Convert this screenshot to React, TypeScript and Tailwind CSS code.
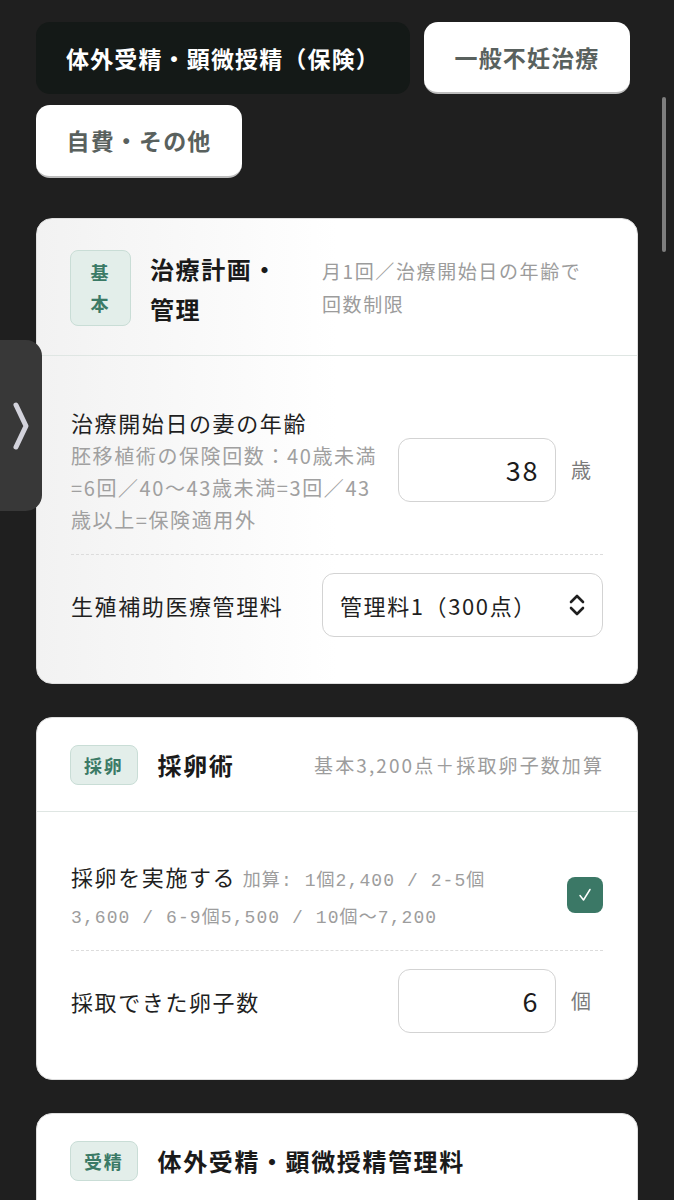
import React from "react";

const JP = '"Noto Sans CJK JP", "Noto Sans", sans-serif';
const MONO = '"Liberation Mono", "Noto Sans CJK JP", monospace';

function Badge({ children, narrow }: { children: React.ReactNode; narrow?: boolean }) {
  return (
    <div
      className={
        "shrink-0 rounded-[8px] border-[1.5px] border-[#c9ddd6] bg-[#e3eeea] text-center text-[18px] font-semibold tracking-[0.1em] text-[#3b7a66] " +
        (narrow ? "w-[61px] py-[6px] leading-[31px]" : "px-[13px] py-[6px] leading-[26px]")
      }
    >
      {children}
    </div>
  );
}

function NumInput({ value, unit }: { value: string; unit: string }) {
  return (
    <div className="flex shrink-0 items-center gap-[15px]">
      <div className="flex h-[64px] w-[158px] items-center justify-end rounded-[12px] border-[1.5px] border-[#d3d3d3] bg-white pr-[16px] text-[27px] text-[#1c1c1c]">
        {value}
      </div>
      <div className="w-[32px] text-[20px] text-[#7a7a7a]">{unit}</div>
    </div>
  );
}

function Divider() {
  return <div className="my-[18px] border-t-[1.5px] border-dashed border-[#dcdcdc]" />;
}

export default function App() {
  return (
    <div
      className="relative min-h-[1200px] overflow-hidden bg-[#1f1f1f] tracking-[0.1em]"
      style={{ fontFamily: JP }}
    >
      {/* tabs */}
      <div className="flex flex-wrap gap-x-[14px] gap-y-[11px] px-[36px] pt-[22px]">
        <div className="flex h-[72px] w-[374px] items-center justify-center rounded-[14px] bg-[#141917] text-[23px] font-bold tracking-[0.05em] text-white">
          体外受精・顕微授精（保険）
        </div>
        <div className="flex h-[72px] w-[206px] items-center justify-center rounded-[14px] border-b-[2px] border-[#bdbdbd] bg-white text-[23px] font-bold tracking-[0.05em] text-[#59615e]">
          一般不妊治療
        </div>
        <div className="flex h-[73px] w-[206px] items-center justify-center rounded-[14px] border-b-[2px] border-[#bdbdbd] bg-white text-[23px] font-bold tracking-[0.05em] text-[#59615e]">
          自費・その他
        </div>
      </div>

      <div className="flex flex-col gap-[33px] px-[36px] pt-[40px]">
        {/* card 1 */}
        <div className="overflow-hidden rounded-[16px] border border-[#dedede] bg-linear-to-r from-[#f2f2f2] via-white to-white">
          <div className="flex items-start gap-[19px] border-b-[1.5px] border-[#dfe6e3] px-[33px] pb-[26px] pt-[31px]">
            <Badge narrow>
              基<br />本
            </Badge>
            <div className="-mt-[1px] w-[153px] shrink-0 whitespace-nowrap text-[24px] font-bold leading-[40px] text-[#1a1a1a]">
              治療計画・<br />管理
            </div>
            <div className="mt-[4px] whitespace-nowrap text-[19px] leading-[33px] text-[#9c9c9c]">
              月1回／治療開始日の年齢で<br />回数制限
            </div>
          </div>
          <div className="px-[34px] pb-[46px] pt-[48px]">
            <div className="flex items-center justify-between gap-[20px]">
              <div className="min-w-0">
                <div className="whitespace-nowrap text-[22px] leading-[36px] text-[#1f1f1f]">
                  治療開始日の妻の年齢
                </div>
                <div className="whitespace-nowrap text-[20px] leading-[32px] text-[#a0a0a0]">
                  胚移植術の保険回数：40歳未満<br />=6回／40〜43歳未満=3回／43<br />歳以上=保険適用外
                </div>
              </div>
              <NumInput value="38" unit="歳" />
            </div>
            <Divider />
            <div className="flex items-center justify-between">
              <div className="whitespace-nowrap text-[22px] text-[#1f1f1f]">生殖補助医療管理料</div>
              <div className="flex h-[64px] w-[281px] items-center justify-between rounded-[12px] border-[1.5px] border-[#d3d3d3] bg-white pl-[17px] pr-[15px] text-[22px] text-[#1f1f1f]">
                <span className="whitespace-nowrap">管理料1（300点）</span>
                <svg width="20" height="28" viewBox="0 0 20 28" fill="none" stroke="#1f1f1f" strokeWidth="2.6" strokeLinecap="round" strokeLinejoin="round">
                  <path d="M4 11 L10 5 L16 11" />
                  <path d="M4 17 L10 23 L16 17" />
                </svg>
              </div>
            </div>
          </div>
        </div>

        {/* card 2 */}
        <div className="overflow-hidden rounded-[16px] border border-[#dedede] bg-white">
          <div className="flex items-center gap-[20px] border-b-[1.5px] border-[#dfe6e3] px-[33px] pb-[26px] pt-[27px]">
            <Badge>採卵</Badge>
            <div className="whitespace-nowrap text-[24px] font-bold text-[#1a1a1a]">採卵術</div>
            <div className="ml-auto whitespace-nowrap text-[19px] tracking-[0.11em] text-[#9c9c9c]">基本3,200点＋採取卵子数加算</div>
          </div>
          <div className="px-[34px] pb-[46px] pt-[46px]">
            <div className="flex items-center justify-between gap-[20px]">
              <div className="text-[22px] leading-[37px]">
                <span className="text-[#1f1f1f]">採卵を実施する</span>{" "}
                <span className="text-[18px] leading-[20px] tracking-[0.06em] text-[#9d9d9d]" style={{ fontFamily: MONO }}>
                  加算: 1個2,400 / 2-5個
                  <br />
                  3,600 / 6-9個5,500 / 10個〜7,200
                </span>
              </div>
              <div className="flex h-[36px] w-[36px] shrink-0 items-center justify-center rounded-[8px] bg-[#3b7866]">
                <svg width="16" height="16" viewBox="0 0 16 16" fill="none" stroke="white" strokeWidth="1.5" strokeLinecap="round" strokeLinejoin="round">
                  <path d="M3 8.5 L6.5 13 L13 2.5" />
                </svg>
              </div>
            </div>
            <Divider />
            <div className="flex items-center justify-between">
              <div className="whitespace-nowrap text-[22px] text-[#1f1f1f]">採取できた卵子数</div>
              <NumInput value="6" unit="個" />
            </div>
          </div>
        </div>

        {/* card 3 */}
        <div className="overflow-hidden rounded-[16px] border border-[#dedede] bg-white">
          <div className="flex items-center gap-[20px] border-b-[1.5px] border-[#dfe6e3] px-[33px] pb-[26px] pt-[27px]">
            <Badge>受精</Badge>
            <div className="whitespace-nowrap text-[24px] font-bold text-[#1a1a1a]">体外受精・顕微授精管理料</div>
          </div>
          <div className="h-[200px]" />
        </div>
      </div>

      {/* side handle */}
      <div className="absolute left-0 top-[340px] flex h-[171px] w-[42px] items-center justify-center rounded-r-[16px] bg-[#383838]">
        <svg width="20" height="52" viewBox="0 0 20 52" fill="none" stroke="#d3d3dc" strokeWidth="5" strokeLinecap="round" strokeLinejoin="round">
          <path d="M5 5 L15 26 L5 47" />
        </svg>
      </div>

      {/* scrollbar */}
      <div className="absolute right-[8px] top-[97px] h-[155px] w-[4px] rounded-full bg-[#7e7e7e]" />
    </div>
  );
}
